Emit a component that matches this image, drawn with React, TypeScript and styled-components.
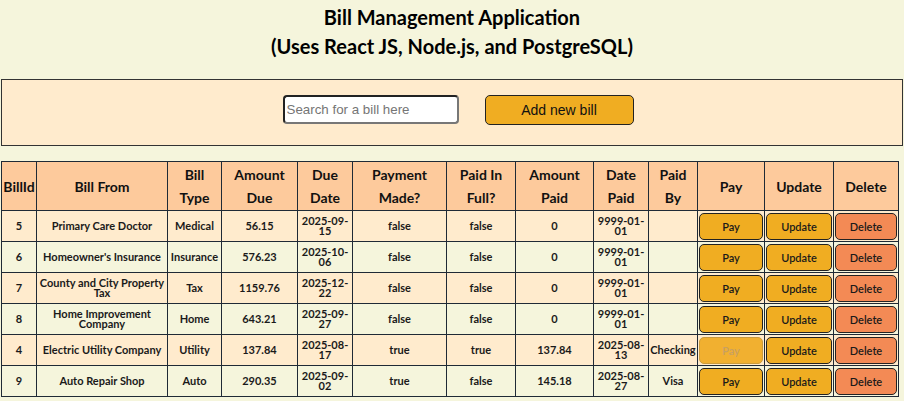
import React from "react";
import styled, { createGlobalStyle } from "styled-components";

const GlobalStyle = createGlobalStyle`
  html, body { margin: 0; padding: 0; }
  body {
    background: #f5f5dc;
    font-family: Lato, "Open Sans", sans-serif;
    color: #111;
  }
`;

const Page = styled.div`
  display: flex;
  flex-direction: column;
  padding: 0 1px;
`;

const Header = styled.header`
  display: flex;
  flex-direction: column;
  align-items: center;
  padding: 3px 0 18px;
`;

const TitleLine = styled.div`
  font-family: Lato, sans-serif;
  font-weight: 700;
  font-size: 20px;
  line-height: 29px;
  color: #000;
`;

const Toolbar = styled.section`
  display: flex;
  justify-content: center;
  align-items: center;
  gap: 26px;
  box-sizing: border-box;
  height: 67px;
  padding: 0 0 6px 12px;
  background: #ffebcd;
  border: 1px solid #333;
`;

const SearchInput = styled.input`
  box-sizing: border-box;
  width: 176px;
  height: 29px;
  padding: 0 2px;
  font-family: "Liberation Sans", Arial, sans-serif;
  font-size: 13.333px;
  background: #fff;
  border: 2px solid #555;
  border-top-color: #222;
  border-left-color: #222;
  border-right-color: #777;
  border-bottom-color: #777;
  border-radius: 4px;
  &::placeholder { color: #757575; }
`;

const AddButton = styled.button`
  box-sizing: border-box;
  width: 149px;
  height: 30px;
  background: #f0ad22;
  border: 1px solid #222;
  border-radius: 5px;
  font-family: "Liberation Sans", Arial, sans-serif;
  font-size: 14px;
  color: #111;
`;

const TableWrap = styled.div`
  display: flex;
  padding-top: 15px;
`;

const Table = styled.table`
  width: 897px;
  table-layout: fixed;
  border-collapse: collapse;
  font-family: Lato, sans-serif;
`;

const Th = styled.th`
  background: #fdca9c;
  border: 1px solid #1f2a36;
  font-size: 14px;
  font-weight: 700;
  line-height: 23px;
  height: 49px;
  padding: 0 1px;
  text-align: center;
  box-sizing: border-box;
`;

const Tr = styled.tr<{ $alt: boolean }>`
  background: ${(p) => (p.$alt ? "#f5f5dc" : "#ffebcd")};
`;

const Td = styled.td`
  border: 1px solid #1f2a36;
  font-size: 11px;
  font-weight: 700;
  line-height: 10.5px;
  height: 31px;
  padding: 0 1px;
  text-align: center;
  box-sizing: border-box;
  color: #1a1a1a;
`;

const ActionCell = styled.td`
  border: 1px solid #1f2a36;
  height: 31px;
  padding: 1px 1px;
  box-sizing: border-box;
`;

const ActionButton = styled.button<{ $variant: "pay" | "update" | "delete" }>`
  display: block;
  width: 100%;
  height: 27px;
  box-sizing: border-box;
  border: 1px solid #222;
  border-radius: 5px;
  background: ${(p) => (p.$variant === "delete" ? "#f38a55" : "#f0ad22")};
  font-family: Lato, sans-serif;
  font-size: 11px;
  font-weight: 600;
  color: #1a1a1a;
  padding: 0;
  &:disabled {
    border-color: #c99a3c;
    background: #f1b030;
    color: #c9a060;
  }
`;

type Bill = {
  id: number;
  from: string;
  type: string;
  due: string;
  dueDate: string;
  made: boolean;
  full: boolean;
  paid: string;
  datePaid: string;
  by: string;
};

const bills: Bill[] = [
  { id: 5, from: "Primary Care Doctor", type: "Medical", due: "56.15", dueDate: "2025-09-15", made: false, full: false, paid: "0", datePaid: "9999-01-01", by: "" },
  { id: 6, from: "Homeowner's Insurance", type: "Insurance", due: "576.23", dueDate: "2025-10-06", made: false, full: false, paid: "0", datePaid: "9999-01-01", by: "" },
  { id: 7, from: "County and City Property Tax", type: "Tax", due: "1159.76", dueDate: "2025-12-22", made: false, full: false, paid: "0", datePaid: "9999-01-01", by: "" },
  { id: 8, from: "Home Improvement Company", type: "Home", due: "643.21", dueDate: "2025-09-27", made: false, full: false, paid: "0", datePaid: "9999-01-01", by: "" },
  { id: 4, from: "Electric Utility Company", type: "Utility", due: "137.84", dueDate: "2025-08-17", made: true, full: true, paid: "137.84", datePaid: "2025-08-13", by: "Checking" },
  { id: 9, from: "Auto Repair Shop", type: "Auto", due: "290.35", dueDate: "2025-09-02", made: true, full: false, paid: "145.18", datePaid: "2025-08-27", by: "Visa" },
];

const colWidths = [35, 131, 54, 76, 55, 94, 69, 78, 55, 49, 67, 69, 65];
const headers: React.ReactNode[] = [
  "BillId",
  "Bill From",
  <>Bill<br />Type</>,
  <>Amount<br />Due</>,
  <>Due<br />Date</>,
  <>Payment<br />Made?</>,
  <>Paid In<br />Full?</>,
  <>Amount<br />Paid</>,
  <>Date<br />Paid</>,
  <>Paid<br />By</>,
  "Pay",
  "Update",
  "Delete",
];

export default function App() {
  return (
    <Page>
      <GlobalStyle />
      <Header>
        <TitleLine>Bill Management Application</TitleLine>
        <TitleLine>(Uses React JS, Node.js, and PostgreSQL)</TitleLine>
      </Header>
      <Toolbar>
        <SearchInput placeholder="Search for a bill here" />
        <AddButton>Add new bill</AddButton>
      </Toolbar>
      <TableWrap>
        <Table>
          <colgroup>
            {colWidths.map((w, i) => (
              <col key={i} style={{ width: w }} />
            ))}
          </colgroup>
          <thead>
            <tr>
              {headers.map((h, i) => (
                <Th key={i}>{h}</Th>
              ))}
            </tr>
          </thead>
          <tbody>
            {bills.map((b, i) => (
              <Tr key={b.id} $alt={i % 2 === 1}>
                <Td>{b.id}</Td>
                <Td>{b.from}</Td>
                <Td>{b.type}</Td>
                <Td>{b.due}</Td>
                <Td>{b.dueDate}</Td>
                <Td>{String(b.made)}</Td>
                <Td>{String(b.full)}</Td>
                <Td>{b.paid}</Td>
                <Td>{b.datePaid}</Td>
                <Td>{b.by}</Td>
                <ActionCell>
                  <ActionButton $variant="pay" disabled={b.full}>Pay</ActionButton>
                </ActionCell>
                <ActionCell>
                  <ActionButton $variant="update">Update</ActionButton>
                </ActionCell>
                <ActionCell>
                  <ActionButton $variant="delete">Delete</ActionButton>
                </ActionCell>
              </Tr>
            ))}
          </tbody>
        </Table>
      </TableWrap>
    </Page>
  );
}
